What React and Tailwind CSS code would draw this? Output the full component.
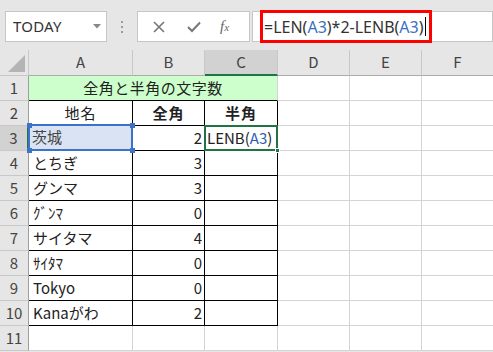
import React from "react";

const F = { fontFamily: '"Noto Sans CJK JP", "Noto Sans", sans-serif' };

const colW = ["w-[104px]", "w-[72px]", "w-[73px]", "w-[72px]", "w-[72px]", "w-[72px]"];

const data = [
  ["茨城", "2"],
  ["とちぎ", "3"],
  ["グンマ", "3"],
  ["ｸﾞﾝﾏ", "0"],
  ["サイタマ", "4"],
  ["ｻｲﾀﾏ", "0"],
  ["Tokyo", "0"],
  ["Kanaがわ", "2"],
];

function RowHead({ n, active }) {
  return (
    <div
      className={
        "w-[29px] h-full shrink-0 flex items-center justify-center text-[15px] text-[#444] border-b border-[#c8c8c8] " +
        (active ? "bg-[#d2d2d2] border-r-2 border-r-[#217346]" : "bg-[#e6e6e6] border-r border-r-[#9e9e9e]")
      }
    >
      {n}
    </div>
  );
}

function Cell({ w, className = "", children }) {
  return <div className={w + " h-full shrink-0 flex items-center overflow-hidden whitespace-nowrap text-[15px] " + className}>{children}</div>;
}

export default function App() {
  return (
    <div className="w-[493px] h-[352px] overflow-hidden bg-[#e6e6e6] text-[#222]" style={F}>
      {/* formula bar area */}
      <div className="h-[50px] flex items-start pt-[11px] pl-[5px]">
        <div className="w-[102px] h-[31px] bg-white border border-[#c6c6c6] flex items-center pl-[7px] pr-[5px] relative">
          <span className="text-[15px] text-[#333] tracking-[0.2px]" style={{ fontFamily: '"Noto Sans", sans-serif' }}>TODAY</span>
          <svg className="ml-auto" width="8" height="5" viewBox="0 0 8 5"><path d="M0 0 L8 0 L4 4.5 Z" fill="#888" /></svg>
        </div>
        <div className="w-[30px] h-[31px] flex flex-col items-center justify-center gap-[3px]">
          <div className="w-[2px] h-[2px] bg-[#9a9a9a]" />
          <div className="w-[2px] h-[2px] bg-[#9a9a9a]" />
          <div className="w-[2px] h-[2px] bg-[#9a9a9a]" />
        </div>
        <div className="w-[113px] h-[31px] bg-white border border-[#c6c6c6] flex items-center">
          <svg className="ml-[15px]" width="12" height="12" viewBox="0 0 12 12"><path d="M1 1 L11 11 M11 1 L1 11" stroke="#777" strokeWidth="1.6" /></svg>
          <svg className="ml-[22px]" width="14" height="12" viewBox="0 0 14 12"><path d="M1 6 L5 10 L13 1.5" stroke="#777" strokeWidth="2" fill="none" /></svg>
          <span className="ml-[19px] text-[15px] italic text-[#666]" style={{ fontFamily: '"Liberation Serif", serif' }}>f<span className="text-[11px]">x</span></span>
        </div>
        <div className="ml-[2px] w-[241px] h-[31px] bg-white border border-[#c6c6c6] flex items-center">
          <div className="ml-[7px] -my-[1px] h-[33px] w-[172px] shrink-0 border-[3px] border-[#ff0000] flex items-center pl-[1px] overflow-hidden">
            <span className="text-[16px] text-[#333] whitespace-nowrap" style={{ fontFamily: '"Noto Sans", sans-serif' }}>
              =LEN(<span className="text-[#3a6fc4]">A3</span>)*2-LENB(<span className="text-[#3a6fc4]">A3</span>)
            </span>
            <div className="ml-[1px] w-[1px] h-[19px] shrink-0 bg-black" />
          </div>
        </div>
      </div>

      {/* column header */}
      <div className="h-[26px] flex">
        <div className="w-[29px] h-full shrink-0 bg-[#e6e6e6] border-r border-b border-[#c8c8c8] relative">
          <svg className="absolute left-[8px] top-[5px]" width="17" height="17" viewBox="0 0 17 17"><path d="M17 0 L17 17 L0 17 Z" fill="#b4b4b4" /></svg>
        </div>
        {["A", "B", "C", "D", "E", "F"].map((c, i) => (
          <div
            key={c}
            className={
              colW[i] +
              " h-full shrink-0 flex items-center justify-center text-[15px] text-[#444] border-r border-r-[#c8c8c8] " +
              (c === "C" ? "bg-[#d2d2d2] border-b-2 border-b-[#217346]" : "bg-[#e6e6e6] border-b border-b-[#ababab]")
            }
          >
            {c}
          </div>
        ))}
      </div>

      {/* row 1 */}
      <div className="h-[25px] flex bg-white">
        <RowHead n="1" />
        <div className="w-[249px] h-full shrink-0 bg-[#ccffcc] border-r border-r-[#d4d4d4] border-b border-b-black flex items-center justify-center text-[15px] tracking-[0.5px]">
          全角と半角の文字数
        </div>
        <Cell w={colW[3]} className="border-r border-b border-[#d4d4d4]" />
        <Cell w={colW[4]} className="border-r border-b border-[#d4d4d4]" />
        <Cell w={colW[5]} className="border-r border-b border-[#d4d4d4]" />
      </div>

      {/* row 2 */}
      <div className="h-[25px] flex bg-white">
        <RowHead n="2" />
        <Cell w={colW[0]} className="border-r border-b border-black justify-center tracking-[1px]">地名</Cell>
        <Cell w={colW[1]} className="border-r border-b border-black justify-center font-bold tracking-[1px]">全角</Cell>
        <Cell w={colW[2]} className="border-r border-b border-black justify-center font-bold tracking-[1px]">半角</Cell>
        <Cell w={colW[3]} className="border-r border-b border-[#d4d4d4]" />
        <Cell w={colW[4]} className="border-r border-b border-[#d4d4d4]" />
        <Cell w={colW[5]} className="border-r border-b border-[#d4d4d4]" />
      </div>

      {/* rows 3-10 */}
      {data.map(([name, num], i) => {
        const r = i + 3;
        const first = r === 3;
        return (
          <div key={r} className="h-[25px] flex bg-white">
            <RowHead n={String(r)} active={first} />
            {first ? (
              <div className="w-[104px] h-full shrink-0 border-r border-b border-black relative">
                <div className="absolute -left-[1px] -top-[2px] right-[-1px] bottom-[-1px] border-2 border-[#3b73c9] bg-[#dae3f3] flex items-center pl-[2px] text-[15px] text-[#444]">
                  {name}
                </div>
                <div className="absolute -left-[2px] -top-[3px] w-[5px] h-[5px] bg-[#3b73c9]" />
                <div className="absolute -right-[3px] -top-[3px] w-[5px] h-[5px] bg-[#3b73c9]" />
                <div className="absolute -left-[2px] -bottom-[3px] w-[5px] h-[5px] bg-[#3b73c9]" />
                <div className="absolute -right-[3px] -bottom-[3px] w-[5px] h-[5px] bg-[#3b73c9]" />
              </div>
            ) : (
              <Cell w={colW[0]} className="border-r border-b border-black pl-[4px]">
                {name}
              </Cell>
            )}
            <Cell w={colW[1]} className="border-r border-b border-black justify-end pr-[2px]">
              {num}
            </Cell>
            {first ? (
              <div className="w-[73px] h-full shrink-0 border-r border-b border-black relative">
                <div className="absolute -left-[1px] -top-[1px] right-[-1px] bottom-[-1px] border-2 border-[#217346] bg-white flex items-center pl-[1px] text-[15px] overflow-hidden whitespace-nowrap">
                  LENB(<span className="text-[#2e5fae]">A3</span>)
                </div>
                <div className="absolute -right-[3px] -bottom-[3px] w-[5px] h-[5px] bg-[#217346] border border-white" />
              </div>
            ) : (
              <Cell w={colW[2]} className="border-r border-b border-black" />
            )}
            <Cell w={colW[3]} className="border-r border-b border-[#d4d4d4]" />
            <Cell w={colW[4]} className="border-r border-b border-[#d4d4d4]" />
            <Cell w={colW[5]} className="border-r border-b border-[#d4d4d4]" />
          </div>
        );
      })}

      {/* row 11 */}
      <div className="h-[25px] flex bg-white">
        <RowHead n="11" />
        {colW.map((w, i) => (
          <Cell key={i} w={w} className="border-r border-b border-[#d4d4d4]" />
        ))}
      </div>
    </div>
  );
}
